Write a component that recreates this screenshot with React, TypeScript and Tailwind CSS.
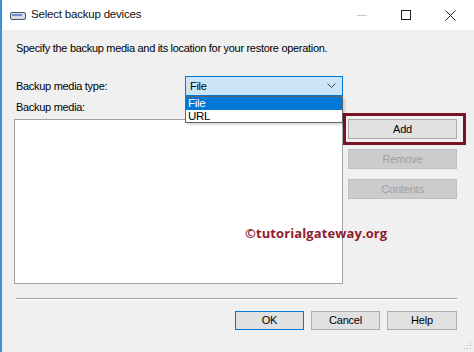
import React from 'react';

const font = { fontFamily: '"Liberation Sans", Arial, sans-serif' };

const DriveIcon = () => (
  <svg width="16" height="8" viewBox="0 0 16 8">
    <rect x="0.5" y="0.5" width="15" height="7" rx="1.5" fill="#d7dde6" stroke="#4a5566" />
    <rect x="2" y="2" width="10" height="2" fill="#6d8fc8" />
  </svg>
);

const WinButton = ({ label, primary, disabled, className = '' }: { label: string; primary?: boolean; disabled?: boolean; className?: string }) => (
  <div
    className={
      'flex items-center justify-center text-[11px] tracking-[-0.2px] border ' +
      (disabled
        ? 'bg-[#cccccc] border-[#bfbfbf] text-[#a0a0a0] '
        : primary
        ? 'bg-[#e1e1e1] border-[#0078d7] text-black '
        : 'bg-[#e1e1e1] border-[#adadad] text-black ') +
      className
    }
  >
    {label}
  </div>
);

export default function App() {
  return (
    <div className="w-[474px] h-[352px] flex flex-col border-l-2 border-[#3b8fdb] bg-white overflow-hidden text-black" style={font}>
      {/* Title bar */}
      <div className="h-[30px] flex items-center bg-white shrink-0">
        <div className="ml-[8px] mt-[1px]"><DriveIcon /></div>
        <div className="ml-[5px] text-[11.5px] tracking-[-0.2px] text-[#111]">Select backup devices</div>
        <div className="ml-auto flex items-center h-full">
          <div className="w-[44px] h-full flex items-center justify-center">
            <div className="w-[10px] h-px bg-[#c8c8c8]" />
          </div>
          <div className="w-[44px] h-full flex items-center justify-center">
            <div className="w-[10px] h-[10px] border border-[#222]" />
          </div>
          <div className="w-[44px] h-full flex items-center justify-center mr-[2px]">
            <svg width="11" height="11" viewBox="0 0 11 11">
              <path d="M0.5 0.5 L10.5 10.5 M10.5 0.5 L0.5 10.5" stroke="#222" strokeWidth="1" />
            </svg>
          </div>
        </div>
      </div>

      {/* Body */}
      <div className="flex-1 bg-[#f0f0f0] flex flex-col pl-[12px] pr-[4px] relative text-[11px] tracking-[-0.3px]">
        <div className="mt-[11px] ml-[2px] leading-[15px]">Specify the backup media and its location for your restore operation.</div>

        <div className="mt-[20px] flex items-center h-[20px]">
          <div className="ml-[2px] w-[169px]">Backup media type:</div>
          <div className="relative">
            <div className="w-[158px] h-[20px] bg-[#cce4f7] border border-[#0078d7] flex items-center pl-[4px]">
              File
              <svg className="ml-auto mr-[6px]" width="9" height="6" viewBox="0 0 9 6">
                <path d="M0.5 0.5 L4.5 4.5 L8.5 0.5" fill="none" stroke="#444" strokeWidth="1" />
              </svg>
            </div>
            <div className="absolute left-0 top-[20px] w-[158px] bg-white border border-[#646464] z-10 text-[11.5px] leading-[13px] shadow-[2px_2px_2px_rgba(0,0,0,0.15)]">
              <div className="bg-[#0078d7] text-white pl-[2px] h-[13px]">File</div>
              <div className="pl-[2px] h-[12px]">URL</div>
            </div>
          </div>
        </div>

        <div className="mt-[4px] ml-[2px] leading-[15px]">Backup media:</div>

        <div className="mt-[4px] flex items-start">
          <div className="w-[329px] h-[165px] shrink-0 bg-white border border-[#a0a0a0]" />
          <div className="flex flex-col shrink-0">
            <div className="-mt-[6px] border-[3px] border-[#7a1424] pl-[2px] pr-[6px] py-[3px]">
              <WinButton label="Add" className="w-[109px] h-[20px]" />
            </div>
            <WinButton label="Remove" disabled className="ml-[5px] mt-[4px] w-[109px] h-[20px]" />
            <WinButton label="Contents" disabled className="ml-[5px] mt-[10px] w-[109px] h-[20px]" />
          </div>
        </div>

        <div className="mt-[14px] ml-[2px] w-[441px] h-[2px] border-t border-[#a0a0a0] border-b border-b-white" />

        <div className="mt-[11px] mr-[13px] flex justify-end gap-[7px]">
          <WinButton label="OK" primary className="w-[69px] h-[19px]" />
          <WinButton label="Cancel" className="w-[69px] h-[19px]" />
          <WinButton label="Help" className="w-[70px] h-[19px]" />
        </div>

        {/* watermark */}
        <div className="absolute left-[243px] top-[194px] text-[13px] font-bold text-[#8e1b2e] tracking-[0.1px]" style={{ fontFamily: '"Open Sans", "DejaVu Sans", sans-serif' }}>
          ©tutorialgateway.org
        </div>

        {/* size grip */}
        <svg className="absolute right-[2px] bottom-[2px]" width="8" height="8" viewBox="0 0 8 8">
          <rect x="6" y="0" width="1" height="1" fill="#b0b0b0" />
          <rect x="3" y="3" width="1" height="1" fill="#b0b0b0" />
          <rect x="6" y="3" width="1" height="1" fill="#b0b0b0" />
          <rect x="0" y="6" width="1" height="1" fill="#b0b0b0" />
          <rect x="3" y="6" width="1" height="1" fill="#b0b0b0" />
          <rect x="6" y="6" width="1" height="1" fill="#b0b0b0" />
        </svg>
      </div>
    </div>
  );
}
